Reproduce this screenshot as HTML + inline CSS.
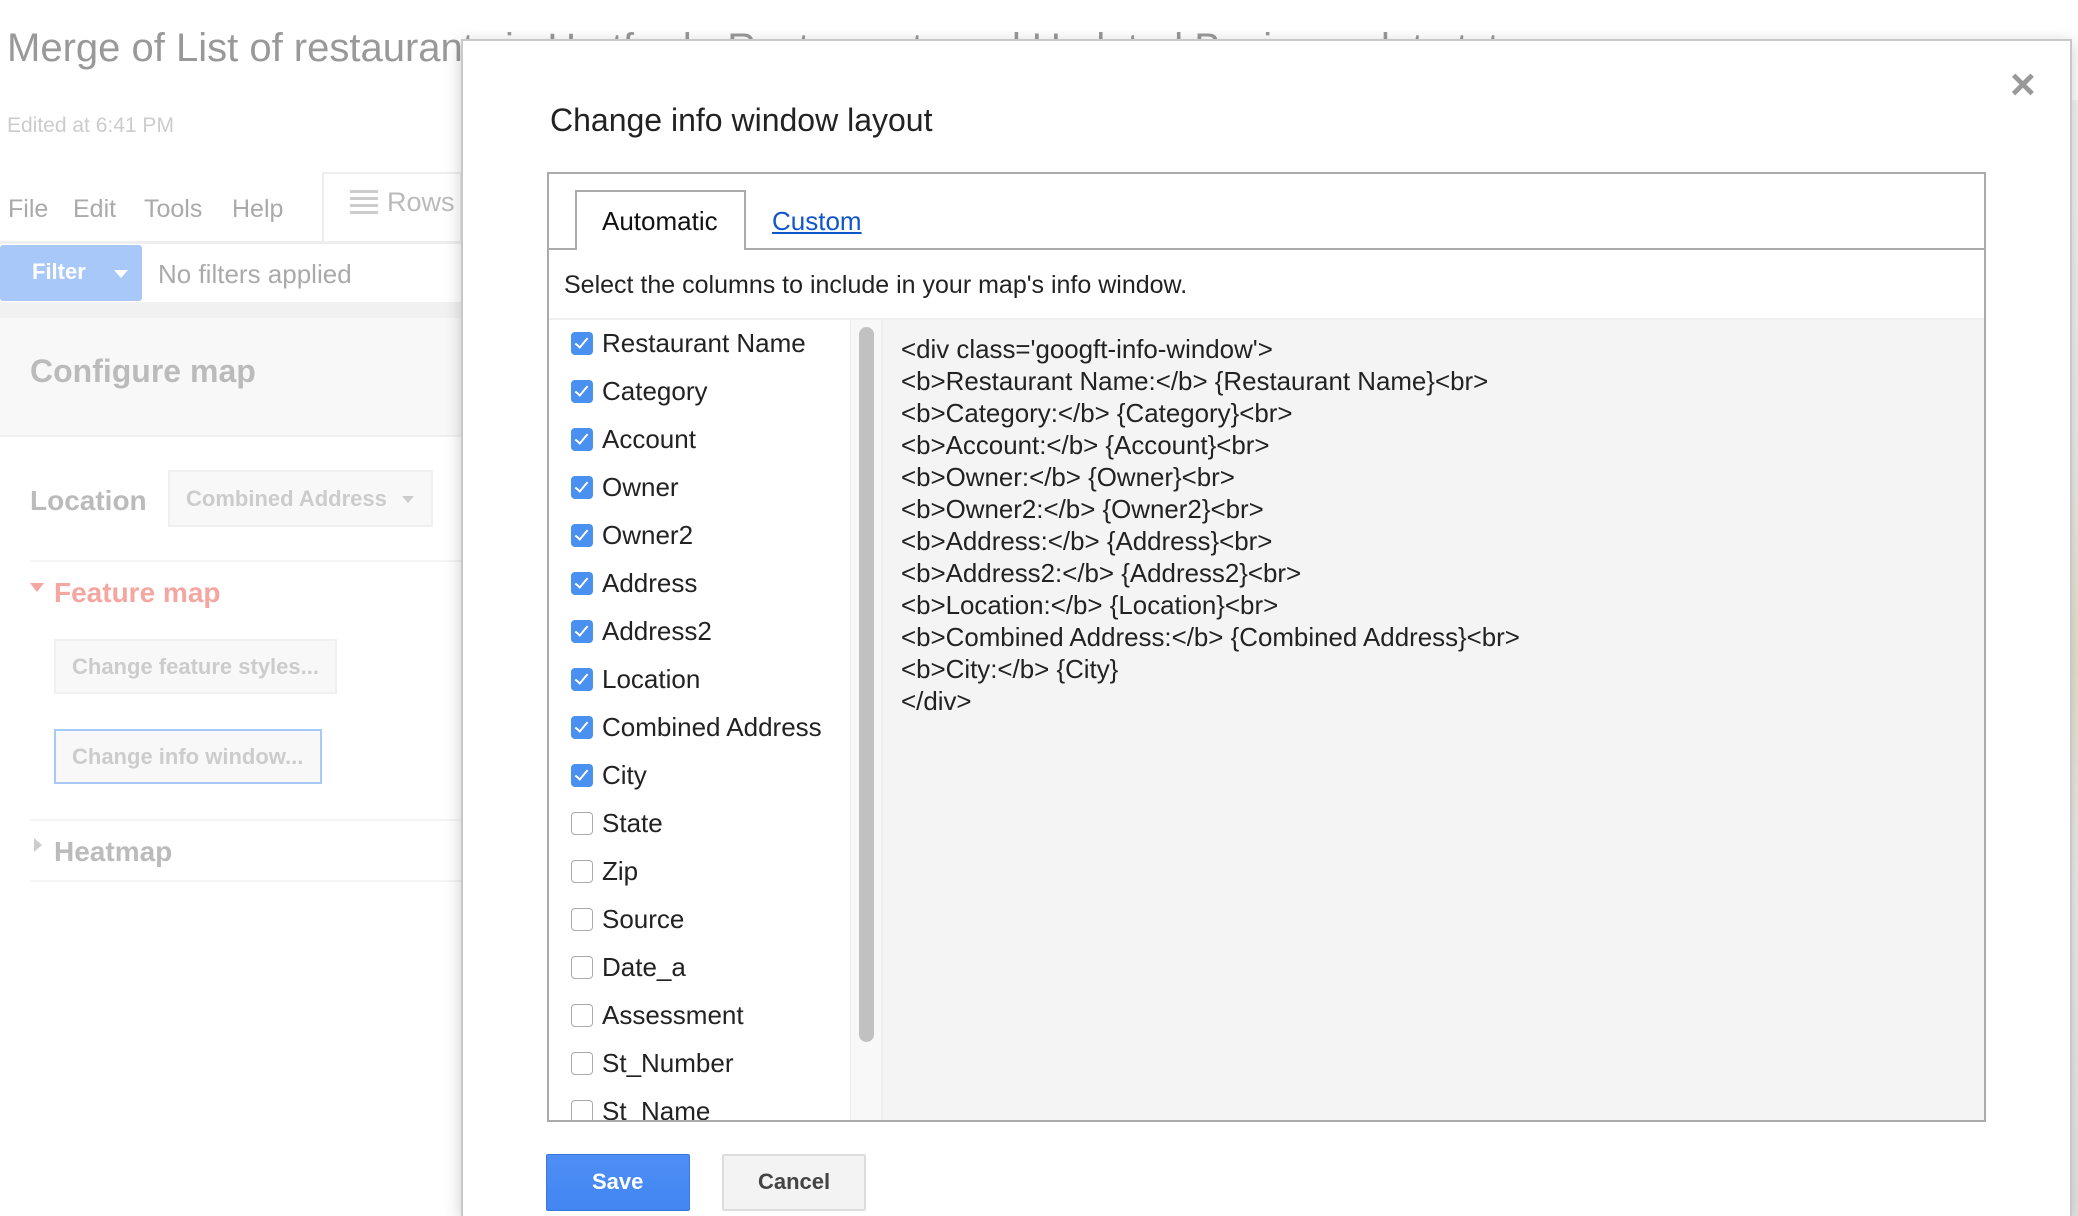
<!DOCTYPE html>
<html style="overflow:hidden"><head><meta charset="utf-8">
<style>
*{margin:0;padding:0;box-sizing:border-box}
html,body{width:2078px;height:1216px;overflow:hidden}
body{background:#fff;font-family:"Liberation Sans",Arial,sans-serif;position:relative}
.a{position:absolute;white-space:nowrap}
.cb{position:absolute;left:571px;width:22px;height:23px;border-radius:4px}
.on{background:#4a90f0}
.on::after{content:"";position:absolute;left:7px;top:3px;width:5px;height:11px;border:solid #fff;border-width:0 2.5px 2.5px 0;transform:rotate(40deg)}
.off{border:1.5px solid #aaa;background:#fff}
.it{position:absolute;left:602px;font-size:26px;color:#222}
.code{position:absolute;left:901px;font-size:25.9px;color:#222;line-height:32px;top:334px}
</style></head><body>
<div class="a" style="left:7px;top:26px;font-size:40px;color:#999">Merge of List of restaurants in Hartford - Restaurants and Updated Business data.txt</div>
<div class="a" style="left:7px;top:114px;font-size:21px;color:#ccc">Edited at 6:41 PM</div>
<div class="a" style="left:8px;top:195px;font-size:25px;color:#aaa">File</div>
<div class="a" style="left:73px;top:195px;font-size:25px;color:#aaa">Edit</div>
<div class="a" style="left:144px;top:195px;font-size:25px;color:#aaa">Tools</div>
<div class="a" style="left:232px;top:195px;font-size:25px;color:#aaa">Help</div>
<div class="a" style="left:322px;top:172px;width:140px;height:70px;border:2px solid #eee;border-bottom:none"></div>
<div class="a" style="left:350px;top:190px;width:28px;height:28px;background:repeating-linear-gradient(#ccc 0 3px,transparent 3px 7px)"></div>
<div class="a" style="left:387px;top:187px;font-size:27px;color:#bbb">Rows</div>
<div class="a" style="left:0;top:241px;width:461px;height:3px;background:#eee"></div>
<div class="a" style="left:0;top:245px;width:142px;height:56px;background:#a9c8fa;border-radius:3px"></div>
<div class="a" style="left:32px;top:259px;font-size:22px;color:#fff;font-weight:bold">Filter</div>
<div class="a" style="left:114px;top:270px;border:7px solid transparent;border-top:8px solid #fff"></div>
<div class="a" style="left:158px;top:259px;font-size:26px;color:#aaa">No filters applied</div>
<div class="a" style="left:0;top:302px;width:461px;height:16px;background:#f1f1f1"></div>
<div class="a" style="left:0;top:318px;width:461px;height:119px;background:#f8f8f8;border-bottom:2px solid #f0f0f0"></div>
<div class="a" style="left:30px;top:353px;font-size:32px;color:#bbb;font-weight:bold">Configure map</div>
<div class="a" style="left:30px;top:485px;font-size:28px;color:#bbb;font-weight:bold">Location</div>
<div class="a" style="left:168px;top:470px;width:265px;height:57px;border:2px solid #f0f0f0;background:#f8f8f8"></div>
<div class="a" style="left:186px;top:486px;font-size:22px;color:#ccc;font-weight:bold">Combined Address</div>
<div class="a" style="left:402px;top:496px;border:6px solid transparent;border-top:7px solid #ccc"></div>
<div class="a" style="left:30px;top:560px;width:431px;height:2px;background:#f4f4f4"></div>
<div class="a" style="left:30px;top:583px;border:7px solid transparent;border-top:9px solid #f4a6a0"></div>
<div class="a" style="left:54px;top:577px;font-size:28px;color:#f4a6a0;font-weight:bold">Feature map</div>
<div class="a" style="left:54px;top:639px;width:283px;height:55px;border:2px solid #f0f0f0;background:#f8f8f8"></div>
<div class="a" style="left:72px;top:654px;font-size:22px;color:#ccc;font-weight:bold">Change feature styles...</div>
<div class="a" style="left:54px;top:729px;width:268px;height:55px;border:2px solid #a9c8fa;background:#f8f8f8"></div>
<div class="a" style="left:72px;top:744px;font-size:22px;color:#ccc;font-weight:bold">Change info window...</div>
<div class="a" style="left:30px;top:819px;width:431px;height:2px;background:#f4f4f4"></div>
<div class="a" style="left:34px;top:838px;border:7px solid transparent;border-left:8px solid #ccc"></div>
<div class="a" style="left:54px;top:836px;font-size:28px;color:#bbb;font-weight:bold">Heatmap</div>
<div class="a" style="left:30px;top:880px;width:431px;height:2px;background:#f4f4f4"></div>
<div class="a" style="left:2070px;top:100px;width:8px;height:1116px;background:linear-gradient(#f4f4f4,#eee 30%,#e8e4d0 50%,#eee 70%,#e6e6e6)"></div>
<div class="a" style="left:461px;top:39px;width:1611px;height:1177px;background:#fff;border:2px solid #c8c8c8;border-bottom:none;box-shadow:0 4px 16px rgba(0,0,0,.2)"></div>
<div class="a" style="left:2010px;top:60px;font-size:44px;color:#999;font-weight:bold">×</div>
<div class="a" style="left:550px;top:102px;font-size:32px;color:#222">Change info window layout</div>
<div class="a" style="left:547px;top:172px;width:1439px;height:950px;border:2px solid #aaa;background:#fff"></div>
<div class="a" style="left:549px;top:248px;width:1435px;height:2px;background:#aaa"></div>
<div class="a" style="left:575px;top:190px;width:171px;height:60px;border:2px solid #aaa;border-bottom:none;background:#fff"></div>
<div class="a" style="left:602px;top:206px;font-size:26px;color:#111">Automatic</div>
<div class="a" style="left:772px;top:206px;font-size:26px;color:#15c;text-decoration:underline">Custom</div>
<div class="a" style="left:564px;top:271px;font-size:25px;color:#222">Select the columns to include in your map's info window.</div>
<div class="a" style="left:549px;top:318px;width:1435px;height:2px;background:#f0f0f0"></div>
<div class="a" style="left:850px;top:320px;width:33px;height:800px;background:#f8f8f8;border-left:1px solid #eee;border-right:2px solid #eee"></div>
<div class="a" style="left:859px;top:327px;width:15px;height:715px;background:#c1c1c1;border-radius:8px"></div>
<div class="a" style="left:883px;top:320px;width:1101px;height:800px;background:#f4f4f4"></div>
<div class="code">&lt;div class='googft-info-window'&gt;<br>&lt;b&gt;Restaurant Name:&lt;/b&gt; {Restaurant Name}&lt;br&gt;<br>&lt;b&gt;Category:&lt;/b&gt; {Category}&lt;br&gt;<br>&lt;b&gt;Account:&lt;/b&gt; {Account}&lt;br&gt;<br>&lt;b&gt;Owner:&lt;/b&gt; {Owner}&lt;br&gt;<br>&lt;b&gt;Owner2:&lt;/b&gt; {Owner2}&lt;br&gt;<br>&lt;b&gt;Address:&lt;/b&gt; {Address}&lt;br&gt;<br>&lt;b&gt;Address2:&lt;/b&gt; {Address2}&lt;br&gt;<br>&lt;b&gt;Location:&lt;/b&gt; {Location}&lt;br&gt;<br>&lt;b&gt;Combined Address:&lt;/b&gt; {Combined Address}&lt;br&gt;<br>&lt;b&gt;City:&lt;/b&gt; {City}<br>&lt;/div&gt;</div>
<div class="a" style="left:549px;top:320px;width:301px;height:800px;overflow:hidden">
<div style="position:absolute;left:-549px;top:-320px;width:900px;height:1200px">
<div class="cb on" style="top:332px"></div><div class="it" style="top:328px">Restaurant Name</div>
<div class="cb on" style="top:380px"></div><div class="it" style="top:376px">Category</div>
<div class="cb on" style="top:428px"></div><div class="it" style="top:424px">Account</div>
<div class="cb on" style="top:476px"></div><div class="it" style="top:472px">Owner</div>
<div class="cb on" style="top:524px"></div><div class="it" style="top:520px">Owner2</div>
<div class="cb on" style="top:572px"></div><div class="it" style="top:568px">Address</div>
<div class="cb on" style="top:620px"></div><div class="it" style="top:616px">Address2</div>
<div class="cb on" style="top:668px"></div><div class="it" style="top:664px">Location</div>
<div class="cb on" style="top:716px"></div><div class="it" style="top:712px">Combined Address</div>
<div class="cb on" style="top:764px"></div><div class="it" style="top:760px">City</div>
<div class="cb off" style="top:812px"></div><div class="it" style="top:808px">State</div>
<div class="cb off" style="top:860px"></div><div class="it" style="top:856px">Zip</div>
<div class="cb off" style="top:908px"></div><div class="it" style="top:904px">Source</div>
<div class="cb off" style="top:956px"></div><div class="it" style="top:952px">Date_a</div>
<div class="cb off" style="top:1004px"></div><div class="it" style="top:1000px">Assessment</div>
<div class="cb off" style="top:1052px"></div><div class="it" style="top:1048px">St_Number</div>
<div class="cb off" style="top:1100px"></div><div class="it" style="top:1096px">St_Name</div>
</div></div>
<div class="a" style="left:546px;top:1154px;width:144px;height:57px;background:linear-gradient(#4d8ff5,#4385f2);border:1px solid #3a78e0;border-radius:2px"></div>
<div class="a" style="left:592px;top:1169px;font-size:22px;color:#fff;font-weight:bold">Save</div>
<div class="a" style="left:722px;top:1154px;width:144px;height:57px;background:#f3f3f3;border:2px solid #ddd;border-radius:2px"></div>
<div class="a" style="left:758px;top:1169px;font-size:22px;color:#444;font-weight:bold">Cancel</div>
</body></html>
